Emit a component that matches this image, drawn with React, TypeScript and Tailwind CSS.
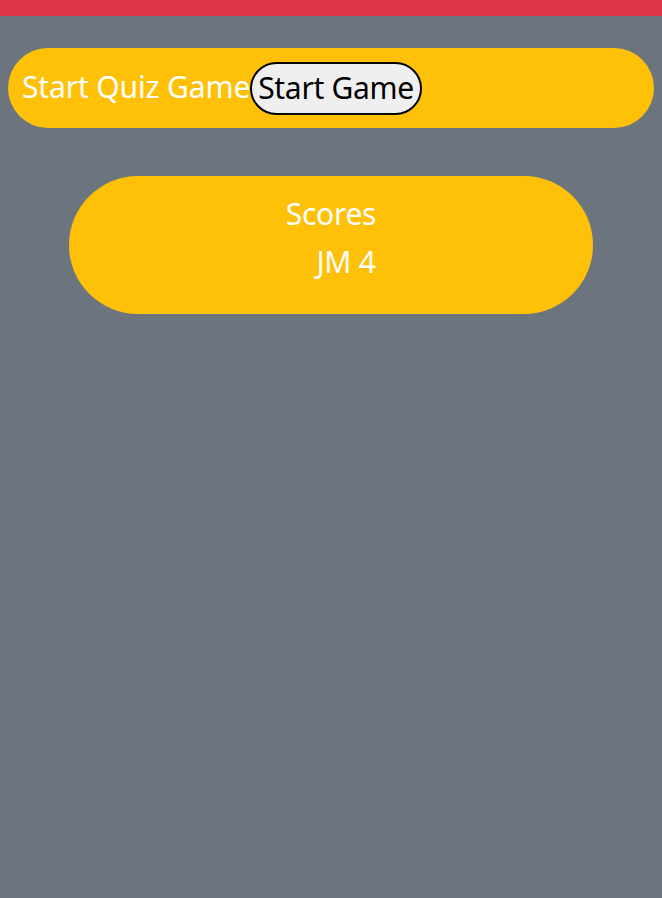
export default function App() {
  return (
    <div
      className="min-h-[898px] bg-[#6c757d] text-white"
      style={{ fontFamily: '"Noto Sans", "Open Sans", sans-serif' }}
    >
      <div className="h-4 bg-[#dc3545]" />

      <div className="px-2 pt-8">
        <div className="flex h-20 items-center rounded-full bg-[#ffc107] pl-[14px]">
          <span className="-mt-[3px] text-[30px] leading-none tracking-[-0.15px]">Start Quiz Game</span>
          <button className="h-[53px] rounded-full border-2 border-black bg-[#efefef] px-[6px] text-[30px] leading-none tracking-[-0.3px] text-black">
            Start Game
          </button>
        </div>
      </div>

      <div className="mx-auto mt-12 flex h-[138px] w-[524px] flex-col items-center rounded-[70px] bg-[#ffc107] pt-[18px]">
        <h2 className="text-[30px] leading-[40px] tracking-[-0.3px]">Scores</h2>
        <ul className="mt-[8px] pl-[30px]">
          <li className="text-[30px] leading-[40px] tracking-[-0.3px]">JM 4</li>
        </ul>
      </div>
    </div>
  );
}
